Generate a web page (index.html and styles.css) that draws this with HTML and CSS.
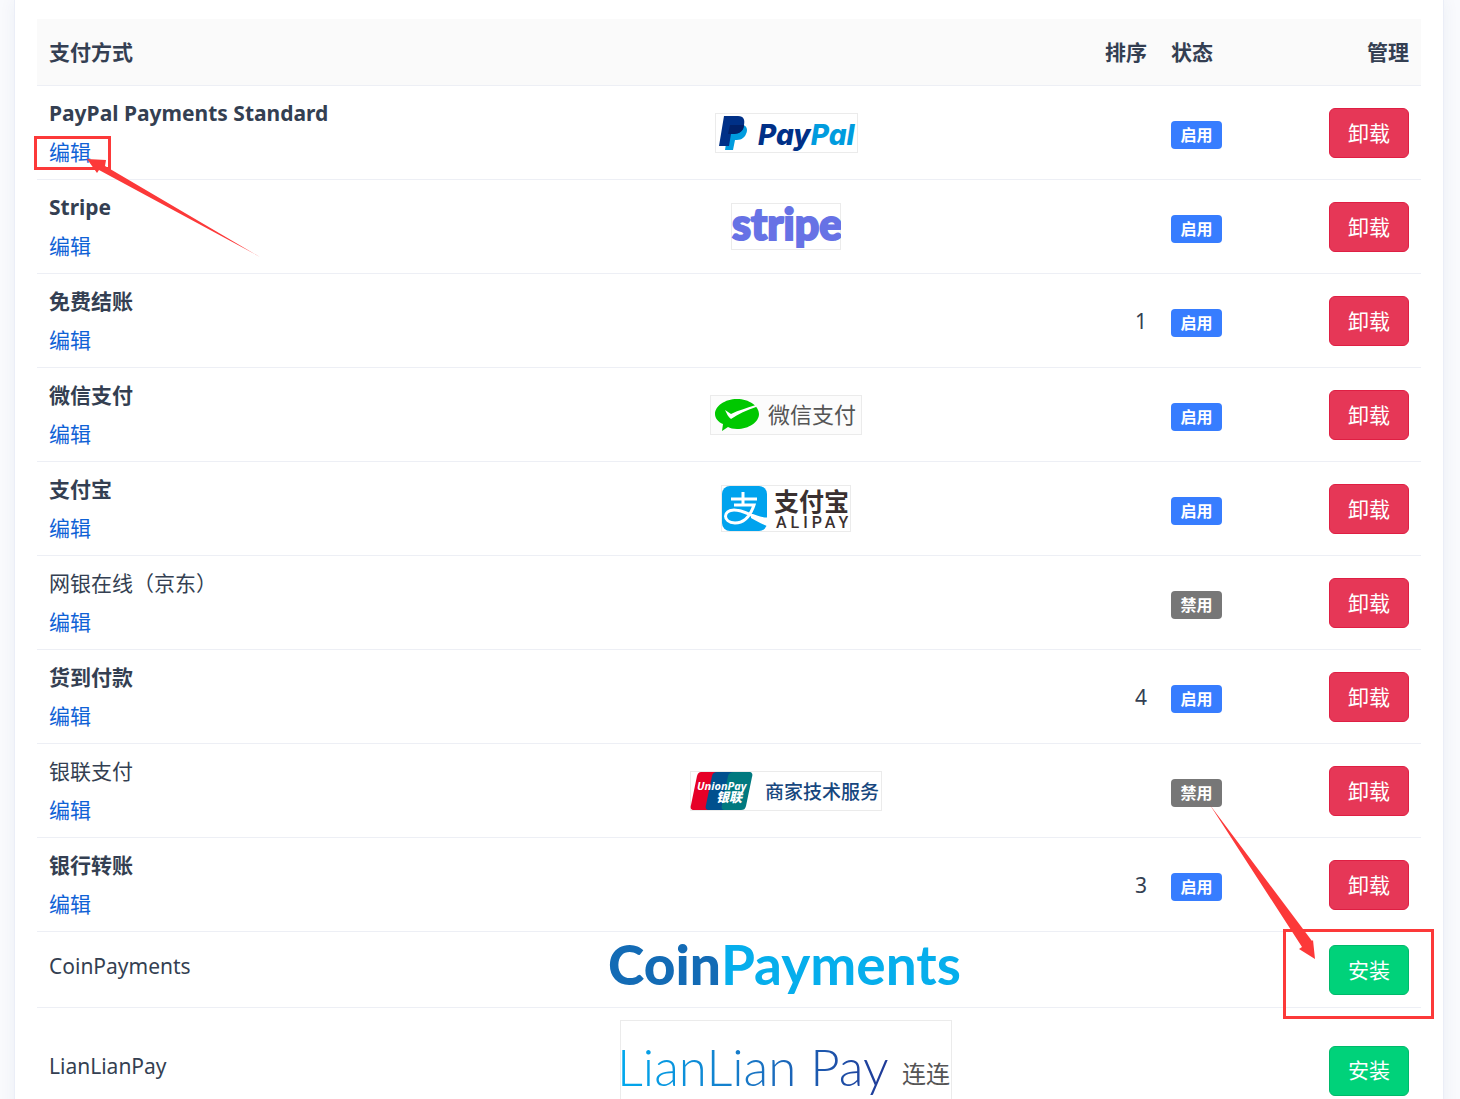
FILE: index.html
```html
<!DOCTYPE html>
<html lang="zh-CN">
<head>
<meta charset="utf-8">
<meta name="viewport" content="width=device-width, initial-scale=1">
<title>支付方式</title>
<link rel="stylesheet" href="styles.css">
</head>
<body>
<main class="panel">
<table class="payments">
<colgroup><col class="col-name"><col class="col-logo"><col class="col-sort"><col class="col-status"><col class="col-action"></colgroup>
<thead>
<tr><th scope="col">支付方式</th><th aria-label="Logo"></th><th scope="col" class="num">排序</th><th scope="col">状态</th><th scope="col" class="action">管理</th></tr>
</thead>
<tbody>
<tr>
<td class="marked"><div class="name on">PayPal Payments Standard</div><a class="edit" href="#">编辑</a>
<span class="mark mark-edit"></span>
<svg class="arrow arrow-edit" width="174" height="100" viewBox="0 0 174 100" aria-hidden="true"><path d="M0 1 19 2 18 8 173 99 12 12 10 15Z"/></svg></td>
<td class="logo">
<svg width="143" height="40" viewBox="0 0 143 40" role="img" aria-label="PayPal"><rect class="frame" x=".5" y=".5" width="142" height="39"/>
<path fill="#009cde" d="M14 12h14c4 1 5 5 3 9-2 5-6 6-11 6l-2 10h-8z"/><path fill="#003087" d="M9 3h14c6 0 7 4 6 9-1 7-6 9-13 9l-2 12H4z"/><path fill="#012169" d="M15 12h14c0 6-5 9-10 9h-6z"/>
<text x="43" y="32" class="paypal" fill="#003087">Pay<tspan fill="#009cde">Pal</tspan></text></svg></td>
<td class="num"></td><td><span class="badge">启用</span></td><td class="action"><button type="button" class="btn">卸载</button></td>
</tr>
<tr>
<td><div class="name on">Stripe</div><a class="edit" href="#">编辑</a></td>
<td class="logo"><svg width="110" height="47" viewBox="0 0 110 47" role="img" aria-label="stripe"><rect class="frame" x=".5" y=".5" width="109" height="46"/><text x="1" y="37" class="stripe">stripe</text></svg></td>
<td class="num"></td><td><span class="badge">启用</span></td><td class="action"><button type="button" class="btn">卸载</button></td>
</tr>
<tr>
<td><div class="name on">免费结账</div><a class="edit" href="#">编辑</a></td>
<td class="logo"></td>
<td class="num">1</td><td><span class="badge">启用</span></td><td class="action"><button type="button" class="btn">卸载</button></td>
</tr>
<tr>
<td><div class="name on">微信支付</div><a class="edit" href="#">编辑</a></td>
<td class="logo"><svg width="152" height="40" viewBox="0 0 152 40" role="img" aria-label="微信支付"><rect class="frame tint" x=".5" y=".5" width="151" height="39"/>
<path fill="#00c800" d="M27 4c12 0 22 7 22 15s-10 15-22 15c-4 0-7-1-9-2l-6 4 1-7C8 27 5 23 5 19 5 11 15 4 27 4Z"/><path fill="#fff" d="m15 15 6 4c8-4 16-6 25-9v2c-9 3-18 7-25 12-3-2-4-5-6-9Z"/>
<text x="58" y="28" class="wechat">微信支付</text></svg></td>
<td class="num"></td><td><span class="badge">启用</span></td><td class="action"><button type="button" class="btn">卸载</button></td>
</tr>
<tr>
<td><div class="name on">支付宝</div><a class="edit" href="#">编辑</a></td>
<td class="logo"><svg width="130" height="47" viewBox="0 0 130 47" role="img" aria-label="支付宝 ALIPAY"><rect class="frame" x=".5" y=".5" width="129" height="46"/>
<rect x="1" y="1" width="45" height="45" rx="8" fill="#00a3ee"/><path d="M10 14h26M22 7v13M13 20h20c-3 9-9 18-19 18-13-1-12-13-1-13 12 0 20 9 33 9" fill="none" stroke="#fff" stroke-width="3"/><path d="M30 31c6 1 11 3 16 4v6c-5-2-11-5-16-8Z" fill="#fff"/>
<text x="53" y="26" class="alipay">支付宝</text><text x="55" y="43" class="alipay-latin">ALIPAY</text></svg></td>
<td class="num"></td><td><span class="badge">启用</span></td><td class="action"><button type="button" class="btn">卸载</button></td>
</tr>
<tr>
<td><div class="name">网银在线（京东）</div><a class="edit" href="#">编辑</a></td>
<td class="logo"></td>
<td class="num"></td><td><span class="badge off">禁用</span></td><td class="action"><button type="button" class="btn">卸载</button></td>
</tr>
<tr>
<td><div class="name on">货到付款</div><a class="edit" href="#">编辑</a></td>
<td class="logo"></td>
<td class="num">4</td><td><span class="badge">启用</span></td><td class="action"><button type="button" class="btn">卸载</button></td>
</tr>
<tr>
<td><div class="name">银联支付</div><a class="edit" href="#">编辑</a></td>
<td class="logo"><svg width="192" height="40" viewBox="0 0 192 40" role="img" aria-label="UnionPay 银联 商家技术服务"><rect class="frame" x=".5" y=".5" width="191" height="39"/>
<path fill="#e60027" d="M11 1h18l-8 38H4c-3 0-4-2-3-5L7 5c1-3 2-4 4-4Z"/><path fill="#00508e" d="M27 1h19l-8 38H19c-3 0-4-2-3-5l6-29c1-3 2-4 5-4Z"/><path fill="#00797f" d="M44 1h15c3 0 4 2 3 5l-6 29c-1 3-2 4-5 4H35c-3 0-4-2-3-5l6-29c1-3 3-4 6-4Z"/>
<text x="7" y="19" class="union">UnionPay</text><text x="26" y="31" class="union-cn">银联</text><text x="75" y="28" class="service">商家技术服务</text></svg></td>
<td class="num"></td><td><span class="badge off">禁用</span></td><td class="action"><button type="button" class="btn">卸载</button></td>
</tr>
<tr>
<td><div class="name on">银行转账</div><a class="edit" href="#">编辑</a></td>
<td class="logo"></td>
<td class="num">3</td><td><span class="badge">启用</span></td><td class="action"><button type="button" class="btn">卸载</button></td>
</tr>
<tr>
<td><div class="name">CoinPayments</div></td>
<td class="logo"><svg width="356" height="51" viewBox="0 0 356 51" role="img" aria-label="CoinPayments"><text x="0" y="41" class="coin">Coin<tspan class="coin-light">Payments</tspan></text></svg></td>
<td class="num"></td><td></td>
<td class="action marked"><button type="button" class="btn install">安装</button>
<span class="mark mark-install"></span>
<svg class="arrow arrow-install" width="106" height="154" viewBox="0 0 106 154" aria-hidden="true"><path d="M0 0 102 136 103 135 105 154 89 144 92 142Z"/></svg></td>
</tr>
<tr>
<td><div class="name">LianLianPay</div></td>
<td class="logo"><svg width="332" height="100" viewBox="0 0 332 100" role="img" aria-label="LianLian Pay 连连"><defs><linearGradient id="lian" gradientUnits="userSpaceOnUse" x1="0" x2="265" y1="0" y2="0"><stop offset="0" stop-color="#00a9ee"/><stop offset=".5" stop-color="#1976c5"/><stop offset="1" stop-color="#203b98"/></linearGradient></defs><rect class="frame" x=".5" y=".5" width="331" height="99"/>
<text x="-3" y="66" class="lian">LianLian Pay</text><text x="282" y="63" class="lian-cn">连连</text></svg></td>
<td class="num"></td><td></td><td class="action"><button type="button" class="btn install">安装</button></td>
</tr>
</tbody>
</table>
</main>
</body>
</html>
```
FILE: styles.css
```css
* { box-sizing: border-box; }
body {
  margin: 0;
  padding: 0 16px 0 14px;
  background: #f9fafd;
  color: #343f52;
  font: 21px/31px "Noto Sans", "Noto Sans CJK SC", sans-serif;
}
.panel {
  padding: 19px 22px 24px;
  background: #fff;
  border: solid #ebeef7;
  border-width: 0 1px;
  box-shadow: 0 0 16px rgba(40, 60, 120, .06);
}
.payments {
  width: 100%;
  table-layout: fixed;
  border-collapse: separate;
  border-spacing: 0;
}
.col-name { width: 32%; }
.col-sort { width: 66px; }
.col-status { width: 120px; }
.col-action { width: 142px; }
th, td {
  padding: 12px;
  border-bottom: 1px solid #edeff5;
  text-align: left;
  vertical-align: middle;
}
td { padding: 12px 12px 11px; }
th { height: 67px; background: #fafafa; font-weight: 700; white-space: nowrap; }
.num, .action { text-align: right; }
.name { padding-bottom: 8px; }
.on { font-weight: 700; }
.edit { display: block; width: fit-content; color: #0f62d6; text-decoration: none; }
.logo { padding: 12px 0; text-align: center; }
.logo svg { display: block; margin: 0 auto; }
.badge {
  display: block;
  width: 51px;
  height: 28px;
  margin-top: 4px;
  border-radius: 4px;
  background: #377dff;
  color: #fff;
  font-size: 16px;
  font-weight: 700;
  line-height: 28px;
  text-align: center;
}
.badge.off { background: #777; }
.btn {
  display: block;
  width: 80px;
  height: 50px;
  margin-left: auto;
  padding: 0;
  border: 1px solid #df1f43;
  border-radius: 6px;
  background: #e63757;
  color: #fff;
  font: inherit;
  cursor: pointer;
}
.btn.install { background: #00d27a; border-color: #00b96b; }

/* logos */
.frame { fill: #fff; stroke: #ebebeb; }
.tint { fill: #fcfcfc; }
.paypal { font: italic 800 28px Inter, sans-serif; }
.stripe { font: 900 43px Lato, sans-serif; fill: #6772e5; stroke: #6772e5; stroke-width: 2px; }
.wechat { font: 22px "Noto Sans CJK SC", sans-serif; fill: #555; }
.alipay { font: 700 25px "Noto Sans CJK SC", sans-serif; fill: #3a3030; }
.alipay-latin { font: 500 16px Roboto, sans-serif; fill: #3a3030; letter-spacing: 4px; }
.union { font: italic 700 11px "Open Sans", sans-serif; fill: #fff; }
.union-cn { font: italic 900 13px "Noto Sans CJK SC", sans-serif; fill: #fff; }
.service { font: 500 19px "Noto Sans CJK SC", sans-serif; fill: #17477e; }
.coin { font: 900 55px Lato, sans-serif; fill: #136bb5; }
.coin-light { font-weight: 700; fill: #06aeec; }
.lian { font: 300 51px Lato, sans-serif; fill: url(#lian); }
.lian-cn { font: 24px "Noto Sans CJK SC", sans-serif; fill: #555; }

/* annotations */
.marked { position: relative; }
.mark { position: absolute; border: 3px solid #fc3939; pointer-events: none; }
.mark-edit { top: 50px; left: -3px; width: 77px; height: 34px; }
.mark-install { top: -3px; right: -13px; width: 151px; height: 90px; }
.arrow { position: absolute; fill: #fc3939; pointer-events: none; }
.arrow-edit { top: 72px; left: 50px; }
.arrow-install { top: -127px; right: 105px; }
```
